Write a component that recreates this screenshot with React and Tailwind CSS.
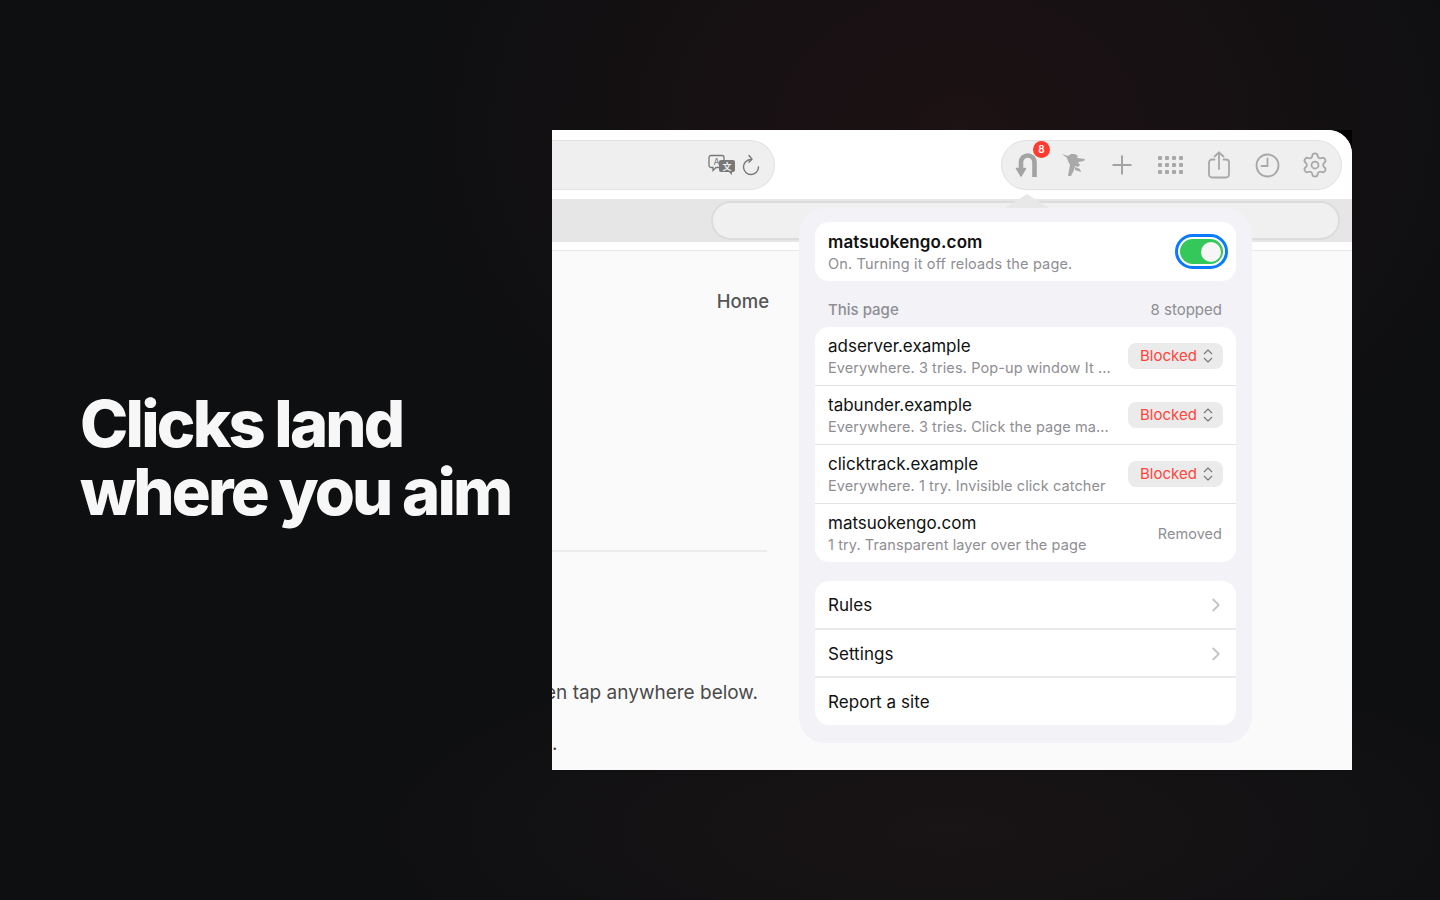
import React from 'react';
import { ChevronRight, ChevronsUpDown, Plus, Settings } from 'lucide-react';

const rows = [
  { host: 'adserver.example', note: 'Everywhere. 3 tries. Pop-up window It ...', blocked: true },
  { host: 'tabunder.example', note: 'Everywhere. 3 tries. Click the page ma...', blocked: true },
  { host: 'clicktrack.example', note: 'Everywhere. 1 try. Invisible click catcher', blocked: true },
  { host: 'matsuokengo.com', note: '1 try. Transparent layer over the page', blocked: false },
];

const UTurnIcon = () => (
  <svg width="26" height="30" viewBox="0 0 26 30" fill="none" stroke="#a3a3a3" strokeWidth="4.6">
    <path d="M7 20V12.250a6.750 6.750 0 0 1 13.500 0V27" />
    <path d="M2.500 18.500H11.500L7 26z" fill="#a3a3a3" strokeWidth="1.500" strokeLinejoin="round" />
  </svg>
);

const RunnerIcon = () => (
  <svg width="26" height="26" viewBox="0 0 26 26" fill="#a9a9a9">
    <path d="M1 2l6 2 3-2 4 0 3 2-1 2 8 1-1 2-6 1 2 3-2 2-3-1-1 4-3 6-3 0 1-6 1-5-2-4-1-3z" />
    <path d="M14 15l5 2 1 3-3-1-3-1z" />
  </svg>
);

const GridIcon = () => (
  <div className="grid grid-cols-4 gap-[3px]">
    {Array.from({ length: 12 }).map((_, i) => (
      <div key={i} className="w-[4px] h-[4px] rounded-[1px] bg-[#a8a8a8]" />
    ))}
  </div>
);

const ShareIcon = () => (
  <svg width="22" height="28" viewBox="0 0 22 28" fill="none" stroke="#a8a8a8" strokeWidth="1.8" strokeLinecap="round" strokeLinejoin="round">
    <path d="M6.500 8.500H4a3 3 0 0 0-3 3v12a3 3 0 0 0 3 3h14a3 3 0 0 0 3-3v-12a3 3 0 0 0-3-3h-2.500" />
    <path d="M11 18V1.500" />
    <path d="M6.500 5.500 11 1.500l4.500 4" />
  </svg>
);

const ClockIcon = () => (
  <svg width="25" height="25" viewBox="0 0 25 25" fill="none" stroke="#a8a8a8" strokeWidth="1.8" strokeLinecap="round">
    <circle cx="12.500" cy="12.500" r="11" />
    <path d="M12.500 5.500V13H6.500" />
  </svg>
);

const TranslateIcon = () => (
  <svg width="28" height="22" viewBox="0 0 28 22">
    <path d="M3 1.500h11a2 2 0 0 1 2 2v8a2 2 0 0 1-2 2H8l-3 3v-3H3a2 2 0 0 1-2-2v-8a2 2 0 0 1 2-2z" fill="#f0f0f0" stroke="#777" strokeWidth="1.300" />
    <text x="8.500" y="11" textAnchor="middle" fontSize="9" fill="#777" fontFamily="Inter, sans-serif">A</text>
    <path d="M13 6h12a2 2 0 0 1 2 2v8a2 2 0 0 1-2 2h-1v3l-3-3h-8a2 2 0 0 1-2-2V8a2 2 0 0 1 2-2z" fill="#777" />
    <text x="19" y="15.500" textAnchor="middle" fontSize="9" fontWeight="700" fill="#f0f0f0" fontFamily="Noto Sans CJK SC, sans-serif">文</text>
  </svg>
);

const ReloadIcon = () => (
  <svg width="18" height="22" viewBox="0 0 18 22" fill="none" stroke="#777" strokeWidth="1.400" strokeLinecap="round" strokeLinejoin="round">
    <path d="M8.500 5.500a7.500 7.500 0 1 0 8 7.500" />
    <path d="M7 1.500l3 3.700-3 3" />
  </svg>
);

const Blocked = () => (
  <div className="flex items-center justify-between w-[95px] h-[26px] -mt-px pl-3 pr-[6px] rounded-lg bg-[#ebebeb] text-[15px] text-[#ff453a]">
    Blocked
    <ChevronsUpDown size={18} strokeWidth={1.5} className="text-[#777]" />
  </div>
);

const Popover = () => (
  <div className="absolute left-[247px] top-[78px] w-[453px] h-[535px] rounded-[26px] bg-[#f2f2f7] px-4 pt-[14px]">
    <div className="absolute -top-[14px] left-[206px] w-0 h-0 border-x-[22px] border-b-[14px] border-x-transparent border-b-[#e8e8e8]" />
    <div className="flex items-center justify-between h-[59px] rounded-[14px] bg-white pl-[13px] pr-2">
      <div className="pt-[3px]">
        <div className="mb-px text-[17px] leading-[21px] font-semibold tracking-[0.12px] text-[#111]">matsuokengo.com</div>
        <div className="text-[14.5px] leading-[20px] tracking-[0.16px] text-[#8e8e93]">On. Turning it off reloads the page.</div>
      </div>
      <div className="flex items-center justify-end w-[53px] h-[35px] rounded-full border-[3px] border-[#0a7aff] bg-white p-[2px]">
        <div className="flex items-center justify-end w-full h-full rounded-full bg-[#34c759] pr-[2px]">
          <div className="w-[20px] h-[20px] rounded-full bg-[#f6f6f6]" />
        </div>
      </div>
    </div>

    <div className="flex items-center justify-between h-[46px] pl-[13px] pr-[14px] pt-[12px] text-[15px] text-[#8e8e93]">
      <span className="font-medium">This page</span>
      <span>8 stopped</span>
    </div>

    <div className="rounded-[14px] bg-white overflow-hidden">
      {rows.map((r, i) => (
        <div key={r.host} className={`flex items-center justify-between pl-[13px] pr-[13px] pt-[1px] ${i < 3 ? 'h-[59px] border-b-[1.5px] border-[#e3e3e6]' : 'h-[58px]'}`}>
          <div>
            <div className="mb-px text-[17px] leading-[22px] text-[#111]">{r.host}</div>
            <div className="text-[14.5px] leading-[20px] tracking-[0.1px] text-[#8e8e93]">{r.note}</div>
          </div>
          {r.blocked ? <Blocked /> : <span className="pr-px text-[14.5px] tracking-[0.05px] text-[#8e8e93]">Removed</span>}
        </div>
      ))}
    </div>

    <div className="mt-[19px] rounded-[14px] bg-white overflow-hidden">
      <div className="flex items-center justify-between h-[49px] pl-[13px] pr-[9px] pt-[3px] text-[17px] tracking-[0.05px] text-[#111] border-b-2 border-[#e9e9ec]">
        Rules
        <ChevronRight size={22} strokeWidth={2} className="-mt-[2px] text-[#c4c4c7]" />
      </div>
      <div className="flex items-center justify-between h-[48px] pl-[13px] pr-[9px] pt-[3px] text-[17px] tracking-[0.05px] text-[#111] border-b-2 border-[#e9e9ec]">
        Settings
        <ChevronRight size={22} strokeWidth={2} className="-mt-[2px] text-[#c4c4c7]" />
      </div>
      <div className="flex items-center h-[47px] pl-[13px] pt-[2px] text-[17px] tracking-[0.05px] text-[#111]">
        Report a site
      </div>
    </div>
  </div>
);

export default function App() {
  return (
    <div className="flex items-center w-full h-screen overflow-hidden bg-[#0e0f11] bg-[radial-gradient(ellipse_560px_420px_at_960px_130px,#1d1214,transparent),radial-gradient(ellipse_620px_200px_at_950px_830px,#191415,transparent)] font-['Inter',sans-serif]">
      <div className="w-[552px] shrink-0 pl-20 mt-4">
        <h1 className="text-[65px] leading-[68px] font-extrabold tracking-[-0.043em] text-[#f7f7f7]">
          Clicks land<br />where you aim
        </h1>
      </div>

      <div className="relative w-[800px] h-[640px] shrink-0 bg-black">
        <div className="flex flex-col h-full rounded-tr-[24px] overflow-hidden bg-[#fafafa]">
          <div className="flex items-center justify-between h-[69px] pr-[10px] pt-[1px] bg-white shrink-0">
            <div className="flex items-center justify-end gap-[6px] w-[223px] h-[50px] pr-[14px] rounded-r-[25px] bg-[#efefef] border border-l-0 border-[#e2e2e2]">
              <TranslateIcon />
              <ReloadIcon />
            </div>
            <div className="flex items-center w-[341px] h-[50px] pl-[1px] rounded-[25px] bg-[#efefef] border border-[#e0e0e0]">
              <div className="relative flex items-center justify-center w-[48px]">
                <UTurnIcon />
                <div className="absolute -top-[9px] left-[30px] flex items-center justify-center w-[17px] h-[17px] rounded-full bg-[#ff3b30] text-[10px] font-semibold text-white">8</div>
              </div>
              <div className="flex items-center justify-center w-[46px]"><RunnerIcon /></div>
              <div className="flex items-center justify-center w-[49px]"><Plus size={30} strokeWidth={1.6} className="text-[#a3a3a3]" /></div>
              <div className="flex items-center justify-center w-[49px]"><GridIcon /></div>
              <div className="flex items-center justify-center w-[48px]"><ShareIcon /></div>
              <div className="flex items-center justify-center w-[48px]"><ClockIcon /></div>
              <div className="flex items-center justify-center w-[48px]"><Settings size={28} strokeWidth={1.5} className="text-[#a8a8a8]" /></div>
            </div>
          </div>

          <div className="flex items-center h-[43px] pl-[159px] pr-[12px] bg-[#e6e6e6] shrink-0">
            <div className="w-full h-[39px] rounded-[20px] bg-[#f0f0f0] border-2 border-[#dcdcdc]" />
          </div>
          <div className="h-[9px] bg-white border-b border-[#e8e8e8] shrink-0" />

          <div className="flex flex-col items-end w-[217px] text-[#444] overflow-hidden">
            <div className="mt-[38px] text-[18.5px] leading-[24px] font-medium text-[#555]">Home</div>
            <div className="self-start w-[215px] h-[2px] mt-[237px] bg-[#ececec]" />
            <div className="mt-[128px] pr-[11px] text-[19px] leading-[26px] whitespace-nowrap text-[#4a4a4a]">then tap anywhere below.</div>
            <div className="self-start mt-[25px] text-[19px] leading-[26px] text-[#4a4a4a]">.</div>
          </div>
        </div>
        <Popover />
      </div>
    </div>
  );
}
